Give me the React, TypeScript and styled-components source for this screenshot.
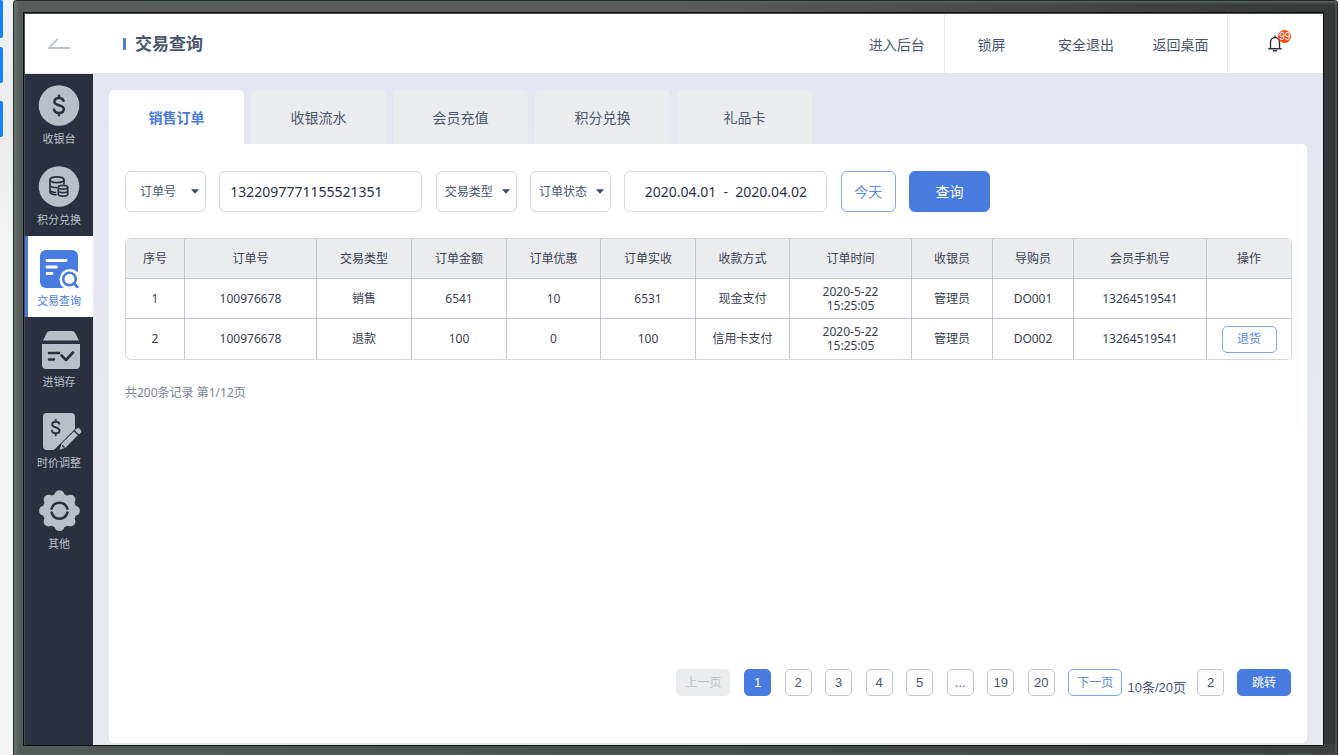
import React from "react";
import styled, { createGlobalStyle, css } from "styled-components";

const color = {
  blue: "#477bdf",
  navy: "#2b3040",
  ink: "#3a4150",
  slate: "#4c566e",
  line: "#c3c7cf",
  soft: "#d3d6dc",
  grey: "#ebecee",
  icon: "#b9bec9",
};

const GlobalStyle = createGlobalStyle`
  *, *::before, *::after { box-sizing: border-box; }
  body {
    margin: 0;
    background: #f4f4f5;
    color: ${color.ink};
    font-family: "Noto Sans", "Noto Sans CJK SC", sans-serif;
    font-size: 12px;
  }
  button, input, select { font: inherit; color: inherit; margin: 0; padding: 0; }
  button { cursor: pointer; }
  a { color: inherit; text-decoration: none; }
`;

const Desktop = styled.div`
  display: flex;
  min-height: 100vh;
  padding: 0 1px 0 0;
`;

const Edge = styled.div`
  width: 13px;
  flex: none;
  display: flex;
  flex-direction: column;
  background: linear-gradient(#f1f3f7, #ebebeb 130px, #f4f4f5 240px);
`;

const EdgeBlock = styled.div<{ $height: number; $gap: number }>`
  width: 3px;
  height: ${(p) => p.$height}px;
  margin-bottom: ${(p) => p.$gap}px;
  border-radius: 0 2px 2px 0;
  background: #1683fc;
`;

const Bezel = styled.div`
  flex: 1;
  min-width: 0;
  display: flex;
  padding: 12px 14px 10px 10px;
  border: solid #222826;
  border-width: 1px 1px 0;
  border-radius: 4px 4px 0 0;
  background:
    linear-gradient(90deg, #535a57, #474d4b 50%, #3a3f3d) bottom / 100% 11px no-repeat,
    linear-gradient(90deg, #585c5a, #5a5c5a 50%, #353838);
  box-shadow: inset 3px 0 3px #66736e, inset 0 2px 2px #565c5a, inset -2px 0 1px #4b504f;
`;

const Screen = styled.div`
  flex: 1;
  min-width: 0;
  display: flex;
  flex-direction: column;
  outline: 1px solid #0d0f0f;
  border: solid #4c5150;
  border-width: 1px 0 0 1px;
  background: #e6e8f0;
`;

const Header = styled.header`
  height: 60px;
  flex: none;
  display: flex;
  align-items: center;
  background: #fff;
  border-bottom: 1px solid #e2e4e9;
`;

const BackButton = styled.button`
  width: 68px;
  height: 59px;
  border: 0;
  background: none;
  display: flex;
  align-items: center;
  justify-content: center;
`;

const Title = styled.h1`
  display: flex;
  align-items: center;
  gap: 9px;
  margin: 0 auto 0 30px;
  font-size: 17px;
  line-height: 24px;
  font-weight: 700;
  color: ${color.slate};
  &::before {
    content: "";
    width: 3px;
    height: 12px;
    border-radius: 1px;
    background: ${color.blue};
  }
`;

const HeaderNav = styled.nav`
  display: grid;
  grid-template-columns: repeat(5, 1fr);
  width: 473px;
  height: 59px;
`;

const headerCell = css<{ $divided?: boolean }>`
  display: flex;
  align-items: center;
  justify-content: center;
  border: 0;
  border-right: 1px solid ${(p) => (p.$divided ? "#eaebef" : "transparent")};
  background: none;
`;

const HeaderLink = styled.a<{ $divided?: boolean }>`
  ${headerCell}
  font-size: 14px;
  color: ${color.slate};
`;

const BellButton = styled.button`
  ${headerCell}
`;

const BellWrap = styled.span`
  position: relative;
  display: flex;
`;

const Badge = styled.span`
  position: absolute;
  top: -5px;
  left: 10px;
  width: 13px;
  height: 13px;
  border-radius: 50%;
  background: #fb4a16;
  color: #fff;
  font-family: "Liberation Sans", sans-serif;
  font-size: 10px;
  line-height: 13px;
  text-align: center;
`;

const Body = styled.div`
  flex: 1;
  display: flex;
  min-height: 0;
`;

const Sidebar = styled.nav`
  width: 68px;
  flex: none;
  background: ${color.navy};
`;

const SideItem = styled.a<{ $active?: boolean }>`
  height: 81px;
  display: flex;
  flex-direction: column;
  align-items: center;
  padding: 11px 0 0;
  font-size: 11px;
  line-height: 16px;
  color: ${(p) => (p.$active ? color.blue : "#bcc1cb")};
  background: ${(p) => (p.$active ? "#fff" : "transparent")};
  box-shadow: ${(p) => (p.$active ? `inset 3px 0 ${color.blue}` : "none")};
  svg { display: block; margin-bottom: 4px; }
`;

const Main = styled.main`
  flex: 1;
  min-width: 0;
  display: flex;
  flex-direction: column;
  padding: 16px 16px 2px;
  background: linear-gradient(#e4e7f1, #e8e9ee);
`;

const Tabs = styled.div`
  display: flex;
  gap: 7px;
`;

const Tab = styled.button<{ $active?: boolean }>`
  width: 135px;
  height: 54px;
  border: 0;
  border-radius: 5px 5px 0 0;
  font-size: 14px;
  font-weight: ${(p) => (p.$active ? 700 : 400)};
  color: ${(p) => (p.$active ? color.blue : color.slate)};
  background: ${(p) => (p.$active ? "#fff" : color.grey)};
`;

const Panel = styled.section`
  flex: 1;
  display: flex;
  flex-direction: column;
  padding: 27px 16px 47px;
  border-radius: 0 5px 5px 5px;
  background: #fff;
`;

const Filters = styled.form`
  display: flex;
  justify-content: space-between;
  width: 865px;
  max-width: 100%;
`;

const SelectBox = styled.label`
  position: relative;
  width: 81px;
  height: 41px;
`;

const Select = styled.select<{ $inset: number }>`
  appearance: none;
  width: 100%;
  height: 100%;
  padding-left: ${(p) => p.$inset}px;
  border: 1px solid ${color.soft};
  border-radius: 6px;
  background: #fff;
  color: ${color.slate};
`;

const Caret = styled.svg`
  position: absolute;
  right: 7px;
  top: 18px;
  pointer-events: none;
`;

const TextInput = styled.input<{ $center?: boolean }>`
  width: 203px;
  height: 41px;
  padding: 0 10px;
  border: 1px solid ${color.soft};
  border-radius: 6px;
  font-size: 14px;
  color: #2c3344;
  text-align: ${(p) => (p.$center ? "center" : "left")};
`;

const Button = styled.button<{ $solid?: boolean; $width: number; $tall?: boolean }>`
  width: ${(p) => p.$width}px;
  height: ${(p) => (p.$tall ? 41 : 27)}px;
  border: 1px solid ${(p) => (p.$solid ? color.blue : "#82a5ea")};
  border-radius: ${(p) => (p.$tall ? 6 : 5)}px;
  font-size: ${(p) => (p.$tall ? 14 : 12)}px;
  line-height: 18px;
  color: ${(p) => (p.$solid ? "#fff" : "#5b8ae3")};
  background: ${(p) => (p.$solid ? color.blue : "#fff")};
  &:disabled {
    color: #bcc1ca;
    background: ${color.grey};
    border-color: ${color.grey};
  }
`;

const Table = styled.table`
  width: 100%;
  margin-top: 26px;
  table-layout: fixed;
  border: 1px solid ${color.soft};
  border-radius: 6px;
  border-collapse: separate;
  border-spacing: 0;
  overflow: hidden;
  text-align: center;
`;

const cell = css`
  height: 40px;
  padding: 0;
  line-height: 14px;
  border-right: 1px solid ${color.line};
  &:last-child { border-right: 0; }
`;

const Th = styled.th`
  ${cell}
  font-weight: 400;
  background: ${color.grey};
  border-bottom: 1px solid ${color.line};
`;

const Td = styled.td`
  ${cell}
  tr:not(:last-child) > & { border-bottom: 1px solid ${color.line}; }
`;

const Summary = styled.p`
  margin: 23px 0 0;
  line-height: 20px;
  color: #7b8393;
`;

const Pagination = styled.nav`
  display: flex;
  align-items: center;
  justify-content: flex-end;
  margin-top: auto;
  color: ${color.slate};
  font-family: "Liberation Sans", "Noto Sans CJK SC", sans-serif;
`;

const PageList = styled.div`
  display: flex;
  justify-content: space-between;
  width: 446px;
`;

const pageBox = css`
  width: 27px;
  height: 27px;
  border: 1px solid ${color.line};
  border-radius: 5px;
  font-size: 13px;
  text-align: center;
  background: #fff;
`;

const PageButton = styled.button<{ $active?: boolean }>`
  ${pageBox}
  ${(p) => p.$active && css`
    color: #fff;
    background: ${color.blue};
    border-color: ${color.blue};
  `}
`;

const PageInput = styled.input`
  ${pageBox}
  margin: 0 13px 0 11px;
`;

const PageInfo = styled.span`
  padding: 11px 0 0 5px;
  font-size: 13px;
  line-height: 16px;
`;

const Dollar = ({ x, y }: { x: number; y: number }) => (
  <g transform={`translate(${x} ${y})`} fill="none" stroke={color.navy} strokeWidth="2.500" strokeLinecap="round">
    <path d="M4.500-4.800C4-6.700 2.300-7.500 0-7.500c-2.600 0-4.600 1.500-4.600 3.700C-4.600-1.400-2-.8 0-.2c2.400.7 4.800 1.400 4.800 3.900C4.800 6 2.700 7.400 0 7.400c-2.700 0-4.600-1.200-5-3.400M0-9.800v2M0 7.800v2" />
  </g>
);

const CashierIcon = () => (
  <svg width="42" height="42" viewBox="0 0 42 42" aria-hidden="true">
    <circle cx="21" cy="20.500" r="20.300" fill={color.icon} />
    <Dollar x={21} y={20.5} />
  </svg>
);

const PointsIcon = () => (
  <svg width="42" height="42" viewBox="0 0 42 42" aria-hidden="true">
    <circle cx="21" cy="20.500" r="20.300" fill={color.icon} />
    <g fill="none" stroke={color.navy} strokeWidth="1.700">
      <ellipse cx="19" cy="13.700" rx="7" ry="2.900" />
      <path d="M12 13.700v12.300c0 1.500 2.800 2.600 6.500 2.800M12 18.700c0 1.700 3 2.900 7 2.900M12 23.700c0 1.400 2.600 2.500 6.200 2.800M26 13.700v4.500" />
      <ellipse cx="25" cy="21.300" rx="4.700" ry="1.900" />
      <path d="M20.300 21.300v7c0 1.100 2.100 1.900 4.700 1.900s4.700-.8 4.700-1.900v-7M20.300 24.800c0 1.100 2.100 1.900 4.700 1.900s4.700-.8 4.700-1.900" />
    </g>
  </svg>
);

const QueryIcon = () => (
  <svg width="42" height="42" viewBox="0 0 42 42" aria-hidden="true">
    <rect x="2" y="3" width="38" height="38" rx="6" fill={color.blue} />
    <path d="M9 13.500h19M9 20h9.500M9 26.500h5" stroke="#fff" strokeWidth="2.800" strokeLinecap="round" />
    <circle cx="32" cy="32.500" r="10.500" fill="#fff" />
    <path d="M34 35l7 7v-9z" fill="#fff" />
    <circle cx="31.500" cy="32" r="6.300" fill="none" stroke={color.blue} strokeWidth="2.600" />
    <path d="M36 36.500l3.200 3.300" stroke={color.blue} strokeWidth="2.800" strokeLinecap="round" />
  </svg>
);

const StockIcon = () => (
  <svg width="42" height="42" viewBox="0 0 42 42" aria-hidden="true">
    <path d="M5 12.500L8.800 5C9.400 3.800 10.400 3 12 3h22c1.600 0 2.600.8 3.200 2L41 12.500zM4 16h38v21a4 4 0 0 1-4 4H8a4 4 0 0 1-4-4z" fill={color.icon} />
    <path d="M11 25h10M11 31.500h5M23.500 27.500l4.500 4.500 7-7.500" fill="none" stroke={color.navy} strokeWidth="2.600" strokeLinecap="round" strokeLinejoin="round" />
  </svg>
);

const PriceIcon = () => (
  <svg width="42" height="42" viewBox="0 0 42 42" overflow="visible" aria-hidden="true">
    <path d="M9 4h24a4 4 0 0 1 4 4v12L16.500 40.500l-2 .5H9a4 4 0 0 1-4-4V8a4 4 0 0 1 4-4z" fill={color.icon} />
    <g transform="translate(4.500 4.500) scale(.78)"><Dollar x={17} y={18} /></g>
    <path d="M21.500 41l2.200-6.500L36 22.500l3.800 3.800L27.700 38.500z" fill={color.icon} />
    <path d="M37.300 21.200l1-1a2.700 2.700 0 0 1 3.800 3.800l-1 1z" fill={color.icon} stroke={color.icon} />
    <path d="M24.700 36.800l1.200 1.200" stroke={color.navy} strokeWidth="1.600" strokeLinecap="round" />
  </svg>
);

const petals = Array.from({ length: 8 }, (_, i) => (i * Math.PI) / 4);

const OtherIcon = () => (
  <svg width="42" height="42" viewBox="0 0 42 42" aria-hidden="true">
    <g fill={color.icon}>
      <circle cx="21.500" cy="20.700" r="17" />
      {petals.map((a) => (
        <circle key={a} cx={21.5 + 15.4 * Math.cos(a)} cy={20.7 + 15.4 * Math.sin(a)} r="5" />
      ))}
    </g>
    <path d="M13.600 18.700a8.200 8.200 0 0 1 15.800 0M13.600 22.700a8.200 8.200 0 0 0 15.800 0" fill="none" stroke={color.navy} strokeWidth="2.600" strokeLinecap="round" />
  </svg>
);

const sideItems = [
  { label: "收银台", Icon: CashierIcon },
  { label: "积分兑换", Icon: PointsIcon },
  { label: "交易查询", Icon: QueryIcon, active: true },
  { label: "进销存", Icon: StockIcon },
  { label: "时价调整", Icon: PriceIcon },
  { label: "其他", Icon: OtherIcon },
];

const tabs = ["销售订单", "收银流水", "会员充值", "积分兑换", "礼品卡"];

const columns: [string, number][] = [
  ["序号", 59], ["订单号", 132], ["交易类型", 95], ["订单金额", 95], ["订单优惠", 94], ["订单实收", 95],
  ["收款方式", 94], ["订单时间", 122], ["收银员", 81], ["导购员", 81], ["会员手机号", 133], ["操作", 84],
];

const orders = [
  { cells: ["1", "100976678", "销售", "6541", "10", "6531", "现金支付"], clerk: "管理员", guide: "DO001", refundable: false },
  { cells: ["2", "100976678", "退款", "100", "0", "100", "信用卡支付"], clerk: "管理员", guide: "DO002", refundable: true },
];

const pages = ["1", "2", "3", "4", "5", "...", "19", "20"];

const FilterSelect = ({ label, inset }: { label: string; inset: number }) => (
  <SelectBox>
    <Select aria-label={label} $inset={inset}>
      <option>{label}</option>
    </Select>
    <Caret width="8" height="5" viewBox="0 0 8 5" aria-hidden="true">
      <path d="M0 .3h8L4 4.700z" fill="#3f4960" />
    </Caret>
  </SelectBox>
);

export default function App() {
  return (
    <>
      <GlobalStyle />
      <Desktop>
        <Edge>
          <EdgeBlock $height={38} $gap={9} />
          <EdgeBlock $height={36} $gap={18} />
          <EdgeBlock $height={36} $gap={0} />
        </Edge>
        <Bezel>
          <Screen>
            <Header>
              <BackButton type="button" aria-label="返回">
                <svg width="24" height="12" viewBox="0 0 24 12" fill="none" stroke="#bcc1ca" strokeWidth="1.800">
                  <path d="M10.500 1L2 10h21" strokeLinejoin="round" />
                </svg>
              </BackButton>
              <Title>交易查询</Title>
              <HeaderNav>
                <HeaderLink href="#admin" $divided>进入后台</HeaderLink>
                <HeaderLink href="#lock">锁屏</HeaderLink>
                <HeaderLink href="#exit">安全退出</HeaderLink>
                <HeaderLink href="#desktop" $divided>返回桌面</HeaderLink>
                <BellButton type="button" aria-label="通知">
                  <BellWrap>
                    <svg width="14" height="17" viewBox="0 0 14 17" fill="none" stroke="#2c3344" strokeWidth="1.400" strokeLinecap="round">
                      <path d="M.8 13.800h12.400M2.500 13.800V7a4.500 4.500 0 0 1 9 0v6.800M7 2.300V1M5.500 15.800h3" />
                    </svg>
                    <Badge>99</Badge>
                  </BellWrap>
                </BellButton>
              </HeaderNav>
            </Header>
            <Body>
              <Sidebar>
                {sideItems.map(({ label, Icon, active }) => (
                  <SideItem key={label} href={`#${label}`} $active={active}>
                    <Icon />
                    {label}
                  </SideItem>
                ))}
              </Sidebar>
              <Main>
                <Tabs role="tablist">
                  {tabs.map((tab, i) => (
                    <Tab key={tab} type="button" role="tab" aria-selected={i === 0} $active={i === 0}>{tab}</Tab>
                  ))}
                </Tabs>
                <Panel>
                  <Filters onSubmit={(e) => e.preventDefault()}>
                    <FilterSelect label="订单号" inset={14} />
                    <TextInput aria-label="订单号" defaultValue="1322097771155521351" />
                    <FilterSelect label="交易类型" inset={8} />
                    <FilterSelect label="订单状态" inset={8} />
                    <TextInput aria-label="日期范围" $center defaultValue="2020.04.01  -  2020.04.02" />
                    <Button type="button" $width={55} $tall>今天</Button>
                    <Button type="submit" $width={81} $tall $solid>查询</Button>
                  </Filters>
                  <Table>
                    <colgroup>
                      {columns.map(([name, width]) => <col key={name} width={width} />)}
                    </colgroup>
                    <thead>
                      <tr>{columns.map(([name]) => <Th key={name} scope="col">{name}</Th>)}</tr>
                    </thead>
                    <tbody>
                      {orders.map((order) => (
                        <tr key={order.cells[0]}>
                          {order.cells.map((value, i) => <Td key={i}>{value}</Td>)}
                          <Td>2020-5-22<br />15:25:05</Td>
                          <Td>{order.clerk}</Td>
                          <Td>{order.guide}</Td>
                          <Td>13264519541</Td>
                          <Td>{order.refundable && <Button type="button" $width={55}>退货</Button>}</Td>
                        </tr>
                      ))}
                    </tbody>
                  </Table>
                  <Summary>共200条记录 第1/12页</Summary>
                  <Pagination aria-label="分页">
                    <PageList>
                      <Button type="button" $width={54} disabled>上一页</Button>
                      {pages.map((page, i) => (
                        <PageButton key={page} type="button" $active={i === 0}>{page}</PageButton>
                      ))}
                      <Button type="button" $width={54}>下一页</Button>
                    </PageList>
                    <PageInfo>10条/20页</PageInfo>
                    <PageInput aria-label="页码" defaultValue="2" />
                    <Button type="button" $width={54} $solid>跳转</Button>
                  </Pagination>
                </Panel>
              </Main>
            </Body>
          </Screen>
        </Bezel>
      </Desktop>
    </>
  );
}
